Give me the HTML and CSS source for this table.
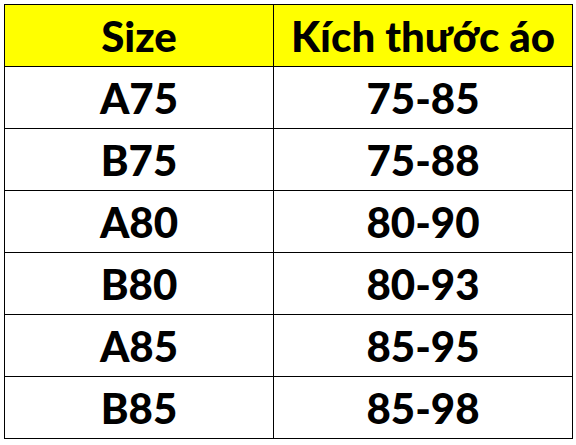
FILE: index.html
```html
<!DOCTYPE html>
<html lang="vi">
<head>
<meta charset="utf-8">
<link rel="stylesheet" href="styles.css">
</head>
<body>
<table class="size-table">
  <thead>
    <tr><th class="col-size">Size</th><th class="col-fit">Kích thước áo</th></tr>
  </thead>
  <tbody>
    <tr><td>A75</td><td>75-85</td></tr>
    <tr><td>B75</td><td>75-88</td></tr>
    <tr><td>A80</td><td>80-90</td></tr>
    <tr><td>B80</td><td>80-93</td></tr>
    <tr><td>A85</td><td>85-95</td></tr>
    <tr><td>B85</td><td>85-98</td></tr>
  </tbody>
</table>
</body>
</html>
```
FILE: styles.css
```css
html, body {
  margin: 0;
  background: #ffffff;
}
body {
  padding: 4px;
  font-family: Lato, "Open Sans", "Liberation Sans", sans-serif;
}
.size-table {
  border-collapse: collapse;
  table-layout: fixed;
  width: 567px;
}
.size-table th,
.size-table td {
  border: 1.5px solid #000;
  height: 61px;
  padding: 0;
  text-align: center;
  vertical-align: middle;
  font-weight: 900;
  font-size: 42px;
  color: #000;
  line-height: 1;
}
.size-table th {
  background: #ffff00;
}
.col-size {
  width: 268px;
}
.col-fit {
  width: 298px;
}
```
